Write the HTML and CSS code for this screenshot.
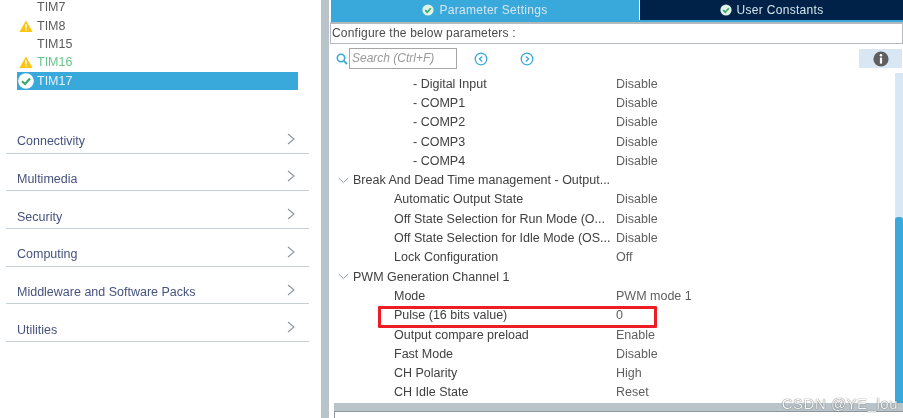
FILE: index.html
```html
<!DOCTYPE html>
<html>
  <head>
    <meta charset="utf-8">
    <title>TIM17 Configuration</title>
    <link rel="stylesheet" href="styles.css">
  </head>
  <body>
    <div class="app">
      <aside class="side">
        <ul class="tims">
          <li class="tim"><span class="tim-icon"></span>TIM7</li>
          <li class="tim">
            <span class="tim-icon"><svg width="14" height="12" viewBox="0 0 14 12"><path d="M7 0.5 13.6 12H.4z" fill="#fdc40f"/><rect x="6.3" y="4" width="1.4" height="4.4" fill="#fff"/><rect x="6.3" y="9.2" width="1.4" height="1.4" fill="#fff"/></svg></span>TIM8
          </li>
          <li class="tim"><span class="tim-icon"></span>TIM15</li>
          <li class="tim tim-green">
            <span class="tim-icon"><svg width="14" height="12" viewBox="0 0 14 12"><path d="M7 0.5 13.6 12H.4z" fill="#fdc40f"/><rect x="6.3" y="4" width="1.4" height="4.4" fill="#fff"/><rect x="6.3" y="9.2" width="1.4" height="1.4" fill="#fff"/></svg></span>TIM16
          </li>
          <li class="tim tim-selected">
            <span class="tim-icon"><svg width="16" height="16" viewBox="0 0 16 16"><circle cx="8" cy="8" r="7.8" fill="#fff"/><path d="M4 8.2 7 11l5-5.6" fill="none" stroke="#3aa96b" stroke-width="2.2"/></svg></span>TIM17
          </li>
        </ul>
        <ul class="menu">
          <li class="menu-item">Connectivity<svg class="chev" width="8" height="12" viewBox="0 0 8 12"><path d="M1 1l6 5-6 5" fill="none" stroke="#8d949c" stroke-width="1.1"/></svg></li>
          <li class="menu-item">Multimedia<svg class="chev" width="8" height="12" viewBox="0 0 8 12"><path d="M1 1l6 5-6 5" fill="none" stroke="#8d949c" stroke-width="1.1"/></svg></li>
          <li class="menu-item">Security<svg class="chev" width="8" height="12" viewBox="0 0 8 12"><path d="M1 1l6 5-6 5" fill="none" stroke="#8d949c" stroke-width="1.1"/></svg></li>
          <li class="menu-item">Computing<svg class="chev" width="8" height="12" viewBox="0 0 8 12"><path d="M1 1l6 5-6 5" fill="none" stroke="#8d949c" stroke-width="1.1"/></svg></li>
          <li class="menu-item">Middleware and Software Packs<svg class="chev" width="8" height="12" viewBox="0 0 8 12"><path d="M1 1l6 5-6 5" fill="none" stroke="#8d949c" stroke-width="1.1"/></svg></li>
          <li class="menu-item">Utilities<svg class="chev" width="8" height="12" viewBox="0 0 8 12"><path d="M1 1l6 5-6 5" fill="none" stroke="#8d949c" stroke-width="1.1"/></svg></li>
        </ul>
      </aside>
      <div class="divider"></div>
      <main class="main">
        <div class="tabs">
          <div class="tab tab-active">
            <svg width="12" height="12" viewBox="0 0 12 12"><circle cx="6" cy="6" r="5.6" fill="#dff3e6"/><path d="M3.2 6.2 5.2 8.2 8.8 4.2" fill="none" stroke="#3aa96b" stroke-width="1.7"/></svg>
            Parameter Settings
          </div>
          <div class="tab tab-dark">
            <svg width="12" height="12" viewBox="0 0 12 12"><circle cx="6" cy="6" r="5.6" fill="#dff3e6"/><path d="M3.2 6.2 5.2 8.2 8.8 4.2" fill="none" stroke="#3aa96b" stroke-width="1.7"/></svg>
            User Constants
          </div>
        </div>
        <div class="configure">Configure the below parameters :</div>
        <div class="searchbar">
          <svg class="search-icon" width="12" height="12" viewBox="0 0 12 12"><circle cx="5" cy="5" r="3.7" fill="none" stroke="#39a9dc" stroke-width="1.6"/><path d="M7.8 7.8 11 11" stroke="#39a9dc" stroke-width="1.8"/></svg>
          <div class="search-box">Search (Ctrl+F)</div>
          <svg class="nav-btn" width="14" height="14" viewBox="0 0 14 14"><circle cx="7" cy="7" r="5.8" fill="none" stroke="#39a9dc" stroke-width="1.3"/><path d="M8.2 4.4 5.4 7l2.8 2.6" fill="none" stroke="#39a9dc" stroke-width="1.3"/></svg>
          <svg class="nav-btn" width="14" height="14" viewBox="0 0 14 14"><circle cx="7" cy="7" r="5.8" fill="none" stroke="#39a9dc" stroke-width="1.3"/><path d="M5.8 4.4 8.6 7l-2.8 2.6" fill="none" stroke="#39a9dc" stroke-width="1.3"/></svg>
          <div class="info-btn"><svg width="16" height="16" viewBox="0 0 16 16"><circle cx="8" cy="8" r="7.6" fill="#5f5f5f"/><rect x="6.9" y="6.6" width="2.2" height="6" fill="#fff"/><circle cx="8" cy="4.3" r="1.3" fill="#fff"/></svg></div>
        </div>
        <div class="params-wrap">
          <div class="params">
            <div class="row sub"><span class="name">- Digital Input</span><span>Disable</span></div>
            <div class="row sub"><span class="name">- COMP1</span><span>Disable</span></div>
            <div class="row sub"><span class="name">- COMP2</span><span>Disable</span></div>
            <div class="row sub"><span class="name">- COMP3</span><span>Disable</span></div>
            <div class="row sub"><span class="name">- COMP4</span><span>Disable</span></div>
            <div class="row group"><svg class="caret" width="11" height="7" viewBox="0 0 11 7"><path d="M.8 1 5.5 5.6 10.2 1" fill="none" stroke="#8d949c" stroke-width="1"/></svg><span class="name">Break And Dead Time management - Output...</span></div>
            <div class="row item"><span class="name">Automatic Output State</span><span>Disable</span></div>
            <div class="row item"><span class="name">Off State Selection for Run Mode (O...</span><span>Disable</span></div>
            <div class="row item"><span class="name">Off State Selection for Idle Mode (OS...</span><span>Disable</span></div>
            <div class="row item"><span class="name">Lock Configuration</span><span>Off</span></div>
            <div class="row group"><svg class="caret" width="11" height="7" viewBox="0 0 11 7"><path d="M.8 1 5.5 5.6 10.2 1" fill="none" stroke="#8d949c" stroke-width="1"/></svg><span class="name">PWM Generation Channel 1</span></div>
            <div class="row item"><span class="name">Mode</span><span>PWM mode 1</span></div>
            <div class="row item"><span class="name">Pulse (16 bits value)</span><span>0</span></div>
            <div class="row item"><span class="name">Output compare preload</span><span>Enable</span></div>
            <div class="row item"><span class="name">Fast Mode</span><span>Disable</span></div>
            <div class="row item"><span class="name">CH Polarity</span><span>High</span></div>
            <div class="row item"><span class="name">CH Idle State</span><span>Reset</span></div>
            <div class="highlight"></div>
          </div>
          <div class="scrollbar"><div class="scroll-thumb"></div></div>
        </div>
        <div class="hbar"></div>
        <div class="bottom"></div>
      </main>
    </div>
    <div class="watermark">CSDN @YE_lou</div>
  </body>
</html>
```

FILE: styles.css
```css
* {
  box-sizing: border-box;
}

body {
  margin: 0;
  width: 903px;
  height: 418px;
  overflow: hidden;
  background: #fff;
  font-family: "Liberation Sans", Arial, sans-serif;
  font-size: 12.5px;
  color: #4a4a4a;
  position: relative;
}

ul {
  list-style: none;
  margin: 0;
  padding: 0;
}

.app {
  display: flex;
  height: 418px;
  filter: blur(0.35px);
}

/* left panel */
.side {
  width: 321px;
  flex: none;
}

.tims {
  margin: -2px 0 0 17px;
  width: 281px;
}

.tim {
  display: flex;
  align-items: center;
  height: 18.4px;
  color: #5c5c5c;
}

.tim-icon {
  width: 20px;
  flex: none;
  display: flex;
  padding-left: 2px;
}

.tim-green {
  color: #66c68b;
}

.tim-selected {
  background: #39a9dc;
  color: #e4f2f9;
  padding-top: 1px;
}

.tim-selected .tim-icon {
  padding-left: 1px;
}

.menu {
  margin: 26px 0 0 6px;
  width: 303px;
}

.menu-item {
  display: flex;
  justify-content: space-between;
  align-items: center;
  height: 37.7px;
  padding: 14px 14px 0 11px;
  border-bottom: 1px solid #c6ced6;
  color: #46527e;
}

.chev {
  margin-top: -5px;
}

.divider {
  width: 8px;
  flex: none;
  background: #b8c4ca;
}

/* right panel */
.main {
  flex: 1;
  min-width: 0;
  padding-left: 2px;
  display: flex;
  flex-direction: column;
}

.tabs {
  display: flex;
  height: 22px;
  flex: none;
  border-bottom: 2px solid #39a9dc;
  font-size: 12px;
}

.tab {
  display: flex;
  align-items: center;
  justify-content: center;
  gap: 5px;
  letter-spacing: 0.3px;
  color: #d5e6ee;
}

.tab-active {
  width: 308px;
  background: #39a9dc;
}

.tab-dark {
  flex: 1;
  margin-left: 1px;
  background: #002148;
}

.configure {
  height: 22px;
  flex: none;
  margin-left: -1px;
  border: 1px solid #b4b9bd;
  border-top-width: 2px;
  padding-left: 1px;
  line-height: 19px;
  white-space: nowrap;
  font-size: 12px;
  letter-spacing: 0.2px;
}

.searchbar {
  display: flex;
  align-items: center;
  height: 29px;
  flex: none;
  padding-left: 5px;
}

.search-box {
  width: 108px;
  height: 21px;
  margin-left: 1px;
  border: 1px solid #a6a6a6;
  padding-left: 2px;
  line-height: 19px;
  font-size: 12px;
  font-style: italic;
  color: #999;
}

.nav-btn {
  margin-left: 17px;
}

.nav-btn + .nav-btn {
  margin-left: 32px;
}

.info-btn {
  margin-left: auto;
  margin-right: 1px;
  width: 43px;
  height: 19px;
  background: #d8e7f3;
  display: flex;
  align-items: center;
  justify-content: center;
}

.params-wrap {
  display: flex;
  height: 330px;
  flex: none;
}

.params {
  flex: 1;
  position: relative;
  padding-top: 1px;
}

.row {
  display: flex;
  align-items: center;
  height: 19.3px;
  white-space: nowrap;
}

.row .name {
  flex: none;
  color: #404040;
}

.row span:last-child {
  color: #5f5f5f;
}

.sub {
  padding-left: 82px;
}

.sub .name {
  width: 203px;
}

.item {
  padding-left: 63px;
}

.item .name {
  width: 222px;
}

.group {
  padding-left: 7px;
}

.group .name,
.row.group span:last-child {
  margin-left: 4px;
  color: #404040;
}

/* red box drawn over the Pulse row */
.highlight {
  position: absolute;
  left: 47px;
  top: 233px;
  width: 279px;
  height: 22px;
  border: 3px solid #ee1c25;
  border-radius: 1px;
}

.scrollbar {
  width: 8px;
  flex: none;
  background: #d8e7f3;
  position: relative;
}

.scroll-thumb {
  position: absolute;
  left: 0;
  right: 0;
  top: 144px;
  bottom: 0;
  background: #39a9dc;
  border-radius: 3px 3px 0 0;
}

.hbar {
  height: 8px;
  flex: none;
  margin-left: 3px;
  background: #b8c4ca;
}

.bottom {
  flex: 1;
  margin-left: 3px;
  border-top: 1px solid #8d979d;
  border-left: 1px solid #8d979d;
}

.watermark {
  position: absolute;
  right: 5px;
  bottom: 6px;
  font-size: 15px;
  letter-spacing: 0.5px;
  color: #fff;
  opacity: 0.85;
  text-shadow: 0 0 1px #555, 0 0 1px #555;
}
```
